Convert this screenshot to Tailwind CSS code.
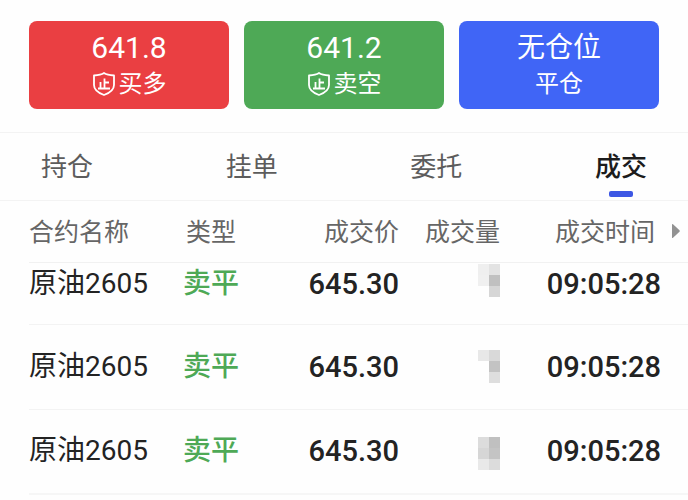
<!DOCTYPE html>
<html lang="zh-CN">
<head>
    <meta charset="UTF-8">
    <meta name="viewport" content="width=device-width, initial-scale=1.0">
    <title>成交</title>
    <script src="https://cdn.jsdelivr.net/npm/@tailwindcss/browser@4"></script>
</head>
<body class="bg-[#fefefe] text-[#232323] font-['Roboto','Noto_Sans_CJK_SC',sans-serif]">
    <!-- Order buttons -->
    <section class="grid grid-cols-3 gap-[15px] px-[29px] pt-[21px] pb-[23px] text-white">
        <button class="rounded-lg bg-[#ea3f42] pt-[9px] pb-[7px]">
            <span class="block text-[30px] leading-9">641.8</span>
            <span class="flex items-center justify-center gap-[3px] text-2xl leading-9">
                <svg class="h-6 w-6" viewBox="0 0 24 24" fill="none" stroke="currentColor" stroke-width="1.8" stroke-linejoin="round" aria-hidden="true">
                    <path d="M12 1 C9.500 2.700 6 3.300 2 3.500 V13 C2 18 6.500 21 12 23 C17.500 21 22 18 22 13 V3.500 C18 3.300 14.500 2.700 12 1 Z"/>
                    <path d="M12.500 6.500 V16 M8.500 10 V16 M12.500 10.500 H17 M6 16.500 H18"/>
                </svg>
                买多
            </span>
        </button>
        <button class="rounded-lg bg-[#4ea956] pt-[9px] pb-[7px]">
            <span class="block text-[30px] leading-9">641.2</span>
            <span class="flex items-center justify-center gap-[3px] text-2xl leading-9">
                <svg class="h-6 w-6" viewBox="0 0 24 24" fill="none" stroke="currentColor" stroke-width="1.8" stroke-linejoin="round" aria-hidden="true">
                    <path d="M12 1 C9.500 2.700 6 3.300 2 3.500 V13 C2 18 6.500 21 12 23 C17.500 21 22 18 22 13 V3.500 C18 3.300 14.500 2.700 12 1 Z"/>
                    <path d="M12.500 6.500 V16 M8.500 10 V16 M12.500 10.500 H17 M6 16.500 H18"/>
                </svg>
                卖空
            </span>
        </button>
        <button class="rounded-lg bg-[#4065f6] pt-[9px] pb-[7px]">
            <span class="block text-[28px] leading-9">无仓位</span>
            <span class="block text-2xl leading-9">平仓</span>
        </button>
    </section>

    <!-- Tabs -->
    <nav class="flex h-[69px] justify-between border-y border-[#f3f3f3] px-[41px] text-[26px] leading-[66px] text-[#5c5c5c]">
        <button>持仓</button>
        <button>挂单</button>
        <button>委托</button>
        <button class="relative font-medium text-[#1c1c1c]">
            成交
            <span class="absolute bottom-[3px] left-1/2 h-1.5 w-6 -translate-x-1/2 rounded-xs bg-[#3d57e4]"></span>
        </button>
    </nav>

    <!-- Trades -->
    <div class="pl-[29px]">
        <table class="w-full table-fixed whitespace-nowrap text-right text-[28px] leading-[42px]">
            <colgroup>
                <col>
                <col class="w-14">
                <col class="w-40">
                <col class="w-[101px]">
                <col class="w-[161px]">
                <col class="w-[27px]">
            </colgroup>
            <thead>
                <tr class="h-[61px] border-b border-[#f1f1f1] text-[25px] text-[#666]">
                    <th class="pt-1 text-left font-normal">合约名称</th>
                    <th class="pt-1 text-center font-normal">类型</th>
                    <th class="pt-1 font-normal">成交价</th>
                    <th class="pt-1 font-normal">成交量</th>
                    <th class="pt-1 pr-1.5 font-normal">成交时间</th>
                    <th>
                        <button class="block pl-[11px]" aria-label="更多">
                            <svg class="h-4 w-2" viewBox="0 0 8 16" fill="#929292" aria-hidden="true"><path d="M0 1.500 Q0 .5 1 1.200 L7.500 7.200 Q8 8 7.500 8.800 L1 14.800 Q0 15.500 0 14.500 Z"/></svg>
                        </button>
                    </th>
                </tr>
            </thead>
            <tbody>
                <tr class="h-[62px] border-b border-[#f3f3f3] align-top">
                    <td class="text-left">原油2605</td>
                    <td class="text-center font-medium text-[#4ea956]">卖平</td>
                    <td class="text-[29px] font-medium">645.30</td>
                    <td class="relative">
                        <div class="absolute top-0 -right-1 h-full w-8 bg-[#fefefe]"></div>
                        <div class="relative mt-px ml-auto grid w-[22px] grid-cols-2">
                            <i class="h-[11px] bg-[#efefef]"></i><i class="h-[11px] bg-[#e3e3e3]"></i>
                            <i class="h-[11px] bg-[#f0f0f0]"></i><i class="h-[11px] bg-[#c0c0c0]"></i>
                            <i class="h-[11px]"></i><i class="h-[11px] bg-[#d6d6d6]"></i>
                        </div>
                    </td>
                    <td class="text-[29px] font-medium">09:05:28</td>
                    <td></td>
                </tr>
                <tr class="h-[85px] border-b border-[#f3f3f3]">
                    <td class="text-left">原油2605</td>
                    <td class="text-center font-medium text-[#4ea956]">卖平</td>
                    <td class="text-[29px] font-medium">645.30</td>
                    <td class="relative">
                        <div class="absolute top-0 -right-1 h-full w-8 bg-[#fefefe]"></div>
                        <div class="relative ml-auto grid w-[22px] grid-cols-2">
                            <i class="h-[11px] bg-[#e8e8e8]"></i><i class="h-[11px] bg-[#d9d9d9]"></i>
                            <i class="h-[11px]"></i><i class="h-[11px] bg-[#c3c3c3]"></i>
                            <i class="h-[11px]"></i><i class="h-[11px] bg-[#dedede]"></i>
                        </div>
                    </td>
                    <td class="text-[29px] font-medium">09:05:28</td>
                    <td></td>
                </tr>
                <tr class="h-[85px] border-b-2 border-[#f6f6f6]">
                    <td class="text-left">原油2605</td>
                    <td class="text-center font-medium text-[#4ea956]">卖平</td>
                    <td class="text-[29px] font-medium">645.30</td>
                    <td class="pt-1">
                        <div class="ml-auto grid w-[22px] grid-cols-2">
                            <i class="h-[11px] bg-[#dcdcdc]"></i><i class="h-[11px] bg-[#c0c0c0]"></i>
                            <i class="h-[11px] bg-[#d6d6d6]"></i><i class="h-[11px] bg-[#c4c4c4]"></i>
                            <i class="h-[11px] bg-[#e9e9e9]"></i><i class="h-[11px] bg-[#dcdcdc]"></i>
                        </div>
                    </td>
                    <td class="text-[29px] font-medium">09:05:28</td>
                    <td></td>
                </tr>
            </tbody>
        </table>
    </div>
</body>
</html>
